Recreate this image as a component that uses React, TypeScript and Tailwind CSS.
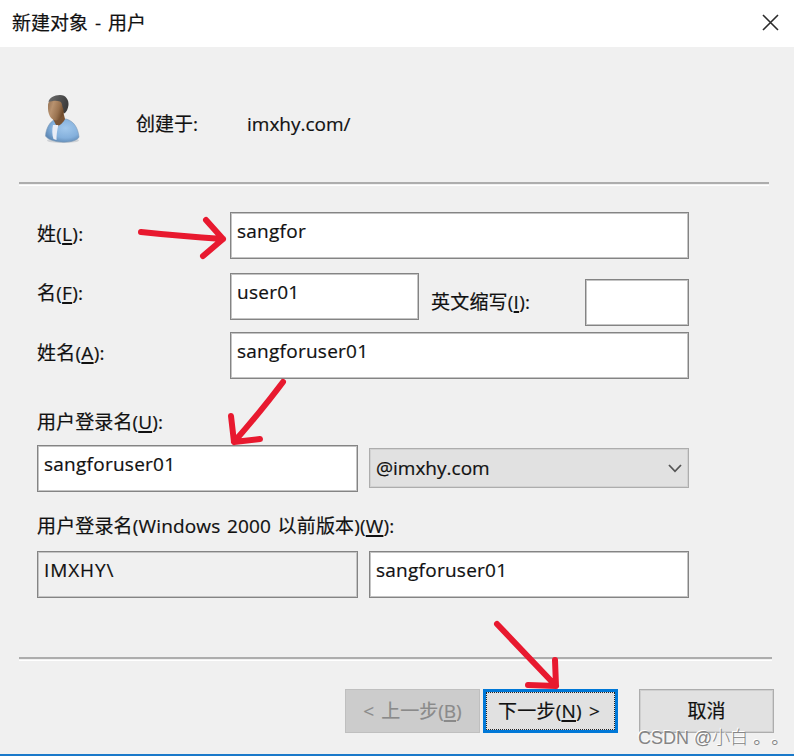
import type { ReactNode } from "react";

function Key({ children }: { children: ReactNode }) {
  return <span className="underline decoration-[1.5px] underline-offset-[2px]">{children}</span>;
}

function Field({ className, children }: { className: string; children?: ReactNode }) {
  return (
    <div className={`h-[47px] shrink-0 border border-[#848484] pl-[6px] pt-[5px] tracking-[0.25px] shadow-[inset_0_0_0_1px_#c4c4c4] ${className}`}>
      {children}
    </div>
  );
}

function Divider({ className }: { className: string }) {
  return <div className={`h-[4px] border-t-2 border-b border-t-[#adadad] border-b-white ${className}`} />;
}

function UserIcon() {
  return (
    <svg className="h-[52px] w-[40px]" viewBox="0 0 40 52">
      <defs>
        <linearGradient id="skin" x1="0" x2="1" y1="0" y2="0.4">
          <stop offset="0" stopColor="#8f6f52" />
          <stop offset="0.35" stopColor="#b8926f" />
          <stop offset="0.7" stopColor="#9a7350" />
          <stop offset="1" stopColor="#6a4627" />
        </linearGradient>
        <linearGradient id="hair" x1="0" x2="1" y1="0" y2="0.3">
          <stop offset="0" stopColor="#6d6d6d" />
          <stop offset="1" stopColor="#3c3c3c" />
        </linearGradient>
        <radialGradient id="shirt" cx="0.6" cy="0.4" r="0.65">
          <stop offset="0" stopColor="#a2c8ec" />
          <stop offset="0.65" stopColor="#84b0dc" />
          <stop offset="1" stopColor="#5f89b5" />
        </radialGradient>
      </defs>
      <ellipse cx="20" cy="46.5" rx="16" ry="2.5" fill="#cfd2d6" />
      <path d="M2.5 42C3 34 7 28 11 26L23 25C31 27 35 34 36 43C33 50 8 50 2.5 42Z" fill="url(#shirt)" stroke="#7897b6" strokeWidth="0.6" />
      <path d="M10 25L20 17L22 25C21 28 17 31 14 33Z" fill="#7a5434" />
      <path d="M10 31L15.5 31C14 36 13.5 41 13.5 46L10.5 45C9 41 9 35 10 31Z" fill="#e9edf6" />
      <path d="M5 12C5 7 8 5 13 5C19 5 22 8 22 13C22 18 19 24 14 26.500C8 27 4.500 20 5 12Z" fill="url(#skin)" />
      <path d="M5.500 8C6 4 11 1 17 1C23 1 26 6 25.500 11C25 15 23.500 18 21.500 19.500C20 18 21 15 19.500 13C19 10 18.500 8 17 7.500C13 6 9 7 5.500 8Z" fill="url(#hair)" />
    </svg>
  );
}

export default function App() {
  return (
    <div className="relative flex h-[756px] w-[794px] flex-col overflow-hidden bg-[#f0f0f0] font-['Open_Sans','Noto_Sans_CJK_SC',sans-serif] text-[19px] leading-[26px] whitespace-nowrap text-[#111] [-webkit-text-stroke:0.2px]">
      <header className="flex h-[47px] shrink-0 items-center justify-between bg-white pr-[15px] pb-[2px] pl-[12px]">
        <span className="[word-spacing:2px]">新建对象 - 用户</span>
        <svg className="h-[17px] w-[17px]" viewBox="0 0 17 17" fill="none" stroke="#2b2b2b" strokeWidth="1.6">
          <path d="M1 1L16 16M16 1L1 16" />
        </svg>
      </header>

      <section className="flex h-[135px] shrink-0 pl-[43px]">
        <div className="w-[93px] pt-[47px]"><UserIcon /></div>
        <div className="w-[111px] pt-[64px]">创建于:</div>
        <div className="pt-[64px]">imxhy.com/</div>
      </section>
      <Divider className="ml-[19px] w-[750px] shrink-0" />

      <main className="flex h-[471px] shrink-0 flex-col pl-[37px]">
        <div className="flex h-[87px] pt-[26px]">
          <div className="w-[193px] pt-[9px] tracking-[0.25px]">姓(<Key>L</Key>):</div>
          <Field className="w-[459px] bg-white">sangfor</Field>
        </div>
        <div className="flex h-[60px]">
          <div className="w-[193px] pt-[7px] tracking-[0.25px]">名(<Key>F</Key>):</div>
          <Field className="w-[189px] bg-white">user01</Field>
          <div className="w-[166px] pl-[12px] pt-[16px] tracking-[0.2px]">英文缩写(<Key>I</Key>):</div>
          <Field className="mt-[6px] w-[104px] bg-white" />
        </div>
        <div className="flex h-[76px]">
          <div className="w-[193px] pt-[7px] tracking-[0.25px]">姓名(<Key>A</Key>):</div>
          <Field className="-mt-px w-[459px] bg-white">sangforuser01</Field>
        </div>
        <div className="h-[36px] tracking-[0.1px]">用户登录名(<Key>U</Key>):</div>
        <div className="flex h-[68px] gap-[11px]">
          <Field className="w-[321px] bg-white">sangforuser01</Field>
          <div className="mt-[3px] flex h-[40px] w-[320px] items-center justify-between border-[1.5px] border-[#adadad] bg-[#e1e1e1] pl-[6px] pr-[6px] shadow-[inset_0_0_0_1px_#d2d2d2]">
            <span>@imxhy.com</span>
            <svg className="h-[9px] w-[14px]" viewBox="0 0 14 9" fill="none" stroke="#555" strokeWidth="1.8">
              <path d="M1 1L7 7.3L13 1" />
            </svg>
          </div>
        </div>
        <div className="h-[38px] tracking-[0.15px] [word-spacing:1.5px]">用户登录名(Windows 2000 以前版本)(<Key>W</Key>):</div>
        <div className="flex gap-[11px]">
          <Field className="w-[321px] bg-[#f0f0f0]"><span className="tracking-[0.9px]">IMXHY\</span></Field>
          <Field className="w-[320px] bg-white">sangforuser01</Field>
        </div>
      </main>

      <Divider className="ml-[19px] w-[753px] shrink-0" />
      <footer className="flex h-[93px] shrink-0 pl-[345px] pt-[28px]">
        <div className="flex h-[44px] w-[135px] items-center justify-center border border-[#bfbfbf] bg-[#cccccc] text-[#8a8a8a]">
          <span className="[word-spacing:2px]">&lt; 上一步(<Key>B</Key>)</span>
        </div>
        <div className="ml-[3px] h-[44px] w-[135px] border-[3px] border-[#0078d7] bg-[#e1e1e1]">
          <div className="flex h-full items-center justify-center border border-dotted border-[#222]">
            <span className="-ml-[3px] tracking-[0.2px] [word-spacing:2px]">下一步(<Key>N</Key>) &gt;</span>
          </div>
        </div>
        <div className="ml-[21px] flex h-[44px] w-[135px] items-center justify-center border-[1.5px] border-[#adadad] bg-[#e1e1e1] shadow-[inset_0_0_0_1px_#cfcfcf]">
          取消
        </div>
      </footer>
      <div className="h-[2px] shrink-0 bg-[#1979ca]" />

      <svg className="absolute inset-0 h-[756px] w-[794px]" fill="none" stroke="#e8192f" strokeWidth="6" strokeLinecap="round" strokeLinejoin="round">
        <path d="M141 232Q180 236 223 239M206 220L223 239L203 256" />
        <path d="M283 382Q262 410 234 442M231 416L234 442L260 439" />
        <path d="M497 624L556 686M555 660L556 686L528 685" />
      </svg>
      <div className="absolute left-[638px] top-[725px] font-['Liberation_Sans','Noto_Sans_CJK_SC',sans-serif] text-[18px] text-[#858585] [-webkit-text-stroke:0px] [text-shadow:-1px_-1px_0_#fff] [text-spacing-trim:space-all]">
        CSDN @<span className="font-light">小白</span> 。。
      </div>
    </div>
  );
}
